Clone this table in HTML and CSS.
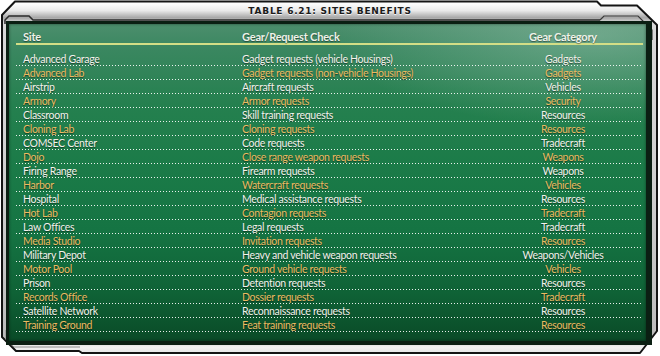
FILE: index.html
```html
<!DOCTYPE html>
<html lang="en">
<head>
<meta charset="utf-8">
<title>Table 6.21: Sites Benefits</title>
<link rel="stylesheet" href="styles.css">
</head>
<body>
<div class="frame">
  <svg class="bezel" width="660" height="356" viewBox="0 0 660 356" aria-hidden="true">
    <defs>
      <linearGradient id="metal" gradientUnits="userSpaceOnUse" x1="0" y1="0" x2="0" y2="356">
        <stop offset="0" stop-color="#ffffff"/>
        <stop offset="0.012" stop-color="#fbfbfb"/>
        <stop offset="0.03" stop-color="#e9e9e9"/>
        <stop offset="0.05" stop-color="#a6a6a6"/>
        <stop offset="0.062" stop-color="#d8d8d8"/>
        <stop offset="0.5" stop-color="#d0d0d0"/>
        <stop offset="0.95" stop-color="#bcbcbc"/>
        <stop offset="0.975" stop-color="#f2f2f2"/>
        <stop offset="1" stop-color="#dedede"/>
      </linearGradient>
    </defs>
    <path d="M15,1.5 L597,1.5 L601,5.5 L637,5.5 L657,25 L657,331 L640,353 L82,353 L79,351 L16,351 L2,337 L2,15 Z" fill="url(#metal)" stroke="#141414" stroke-width="2" stroke-linejoin="round"/>
    <path d="M5,24 L5,20 L9,16 L29,16 L33,20 L600,20" fill="none" stroke="#2a2a2a" stroke-width="1.5"/>
    <path d="M600,20 L604,16 L638,16 L652,30 L652,40" fill="none" stroke="#3a3a3a" stroke-width="1.2"/>
    <path d="M6,330 L6,340 L14,347 L80,347" fill="none" stroke="#8a8a8a" stroke-width="1"/>
  </svg>

  <h1 class="title">TABLE 6.21: SITES BENEFITS</h1>

  <div class="panel">
    <div class="head">
      <span>Site</span>
      <span>Gear/Request Check</span>
      <span class="cat">Gear Category</span>
    </div>
    <div class="rows">
      <div class="row"><span>Advanced Garage</span><span>Gadget requests (vehicle Housings)</span><span class="cat">Gadgets</span></div>
      <div class="row alt"><span>Advanced Lab</span><span>Gadget requests (non-vehicle Housings)</span><span class="cat">Gadgets</span></div>
      <div class="row"><span>Airstrip</span><span>Aircraft requests</span><span class="cat">Vehicles</span></div>
      <div class="row alt"><span>Armory</span><span>Armor requests</span><span class="cat">Security</span></div>
      <div class="row"><span>Classroom</span><span>Skill training requests</span><span class="cat">Resources</span></div>
      <div class="row alt"><span>Cloning Lab</span><span>Cloning requests</span><span class="cat">Resources</span></div>
      <div class="row"><span>COMSEC Center</span><span>Code requests</span><span class="cat">Tradecraft</span></div>
      <div class="row alt"><span>Dojo</span><span>Close range weapon requests</span><span class="cat">Weapons</span></div>
      <div class="row"><span>Firing Range</span><span>Firearm requests</span><span class="cat">Weapons</span></div>
      <div class="row alt"><span>Harbor</span><span>Watercraft requests</span><span class="cat">Vehicles</span></div>
      <div class="row"><span>Hospital</span><span>Medical assistance requests</span><span class="cat">Resources</span></div>
      <div class="row alt"><span>Hot Lab</span><span>Contagion requests</span><span class="cat">Tradecraft</span></div>
      <div class="row"><span>Law Offices</span><span>Legal requests</span><span class="cat">Tradecraft</span></div>
      <div class="row alt"><span>Media Studio</span><span>Invitation requests</span><span class="cat">Resources</span></div>
      <div class="row"><span>Military Depot</span><span>Heavy and vehicle weapon requests</span><span class="cat">Weapons/Vehicles</span></div>
      <div class="row alt"><span>Motor Pool</span><span>Ground vehicle requests</span><span class="cat">Vehicles</span></div>
      <div class="row"><span>Prison</span><span>Detention requests</span><span class="cat">Resources</span></div>
      <div class="row alt"><span>Records Office</span><span>Dossier requests</span><span class="cat">Tradecraft</span></div>
      <div class="row"><span>Satellite Network</span><span>Reconnaissance requests</span><span class="cat">Resources</span></div>
      <div class="row alt"><span>Training Ground</span><span>Feat training requests</span><span class="cat">Resources</span></div>
    </div>
  </div>
</div>
</body>
</html>
```

FILE: styles.css
```css
* {
  box-sizing: border-box;
}

body {
  margin: 0;
  background: #ffffff;
}

.frame {
  position: relative;
  width: 660px;
  height: 356px;
  overflow: hidden;
  font-family: Lato, "Open Sans", "Liberation Sans", sans-serif;
}

.bezel {
  position: absolute;
  left: 0;
  top: 0;
  z-index: 0;
}

.title {
  position: relative;
  z-index: 1;
  margin: 0;
  height: 21px;
  padding-top: 2px;
  line-height: 19px;
  text-align: center;
  font-family: "DejaVu Sans", "Liberation Sans", sans-serif;
  font-size: 9px;
  font-weight: bold;
  letter-spacing: 0.75px;
  color: #1c1c1c;
  text-shadow: 0 1px 0 rgba(255, 255, 255, 0.8);
}

.panel {
  position: relative;
  z-index: 1;
  margin-left: 6px;
  width: 646px;
  height: 324px;
  border-style: solid;
  border-color: #0b1f13;
  border-width: 3px 6px 4px 3px;
  padding: 0 3px 0 7px;
  background:
    radial-gradient(ellipse 260px 90px at 92% 4%, rgba(190, 220, 205, 0.35), rgba(190, 220, 205, 0) 100%),
    linear-gradient(to bottom, #4c8e6d 0%, #3a8760 8%, #25804f 25%, #1b7b48 45%, #157443 65%, #0f6236 85%, #0a4a27 100%);
  box-shadow: inset 0 0 3px rgba(0, 0, 0, 0.5);
}

.head {
  display: grid;
  grid-template-columns: 219px 243px 1fr;
  height: 21px;
  padding: 6px 2px 0 7px;
  line-height: 13px;
  font-size: 11px;
  font-weight: bold;
  letter-spacing: -0.2px;
  color: #eef2e8;
  border-bottom: 2px solid #d3de86;
  text-shadow: 0 1px 1px rgba(0, 0, 0, 0.45);
}

.rows {
  margin-top: 7px;
}

.row {
  display: grid;
  grid-template-columns: 219px 243px 1fr;
  height: 14px;
  padding: 0 2px 0 7px;
  line-height: 14px;
  font-size: 10.5px;
  letter-spacing: -0.3px;
  color: #f3f3ec;
  white-space: nowrap;
  text-shadow: 0 1px 1px rgba(0, 0, 0, 0.5);
  background-image: repeating-linear-gradient(90deg, rgba(255, 255, 255, 0.9) 0 1px, rgba(255, 255, 255, 0) 1px 3px);
  background-size: 100% 1px;
  background-position: left bottom;
  background-repeat: no-repeat;
}

.row.alt {
  color: #ebbb62;
}

.cat {
  text-align: center;
}
```
